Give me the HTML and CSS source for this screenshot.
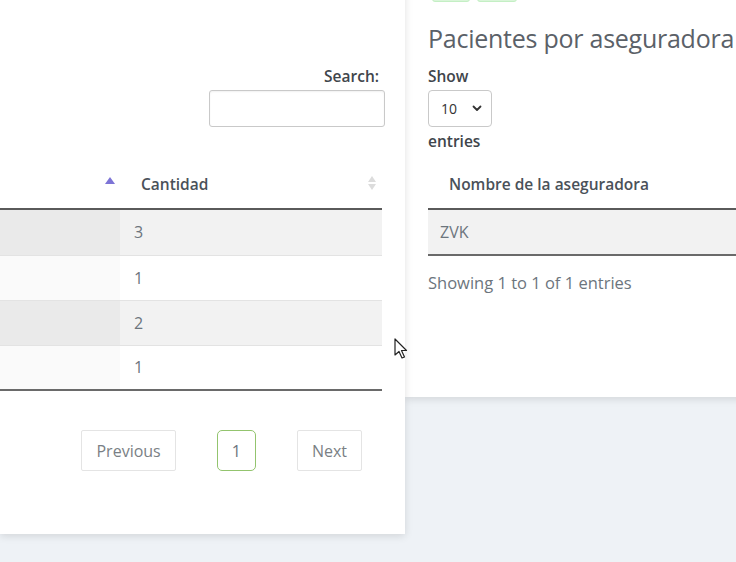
FILE: index.html
```
<!DOCTYPE html>
<html lang="es">
<head>
<meta charset="utf-8">
<title>Pacientes por aseguradora</title>
<link rel="stylesheet" href="styles.css">
</head>
<body>
<div class="layout">
  <section class="card card-left">
    <div class="dt-top">
      <label class="search">Search:</label>
      <input class="search-input" type="text" aria-label="Search">
    </div>
    <table class="dt dt-left">
      <thead>
        <tr>
          <th class="col-a"><span class="sort-asc"></span></th>
          <th class="col-b">Cantidad<span class="sort-both"><i class="up"></i><i class="down"></i></span></th>
        </tr>
      </thead>
      <tbody>
        <tr class="odd"><td class="col-a"></td><td>3</td></tr>
        <tr class="even"><td class="col-a"></td><td>1</td></tr>
        <tr class="odd"><td class="col-a"></td><td>2</td></tr>
        <tr class="even"><td class="col-a"></td><td>1</td></tr>
      </tbody>
    </table>
    <div class="pager">
      <a class="pg">Previous</a>
      <a class="pg active">1</a>
      <a class="pg">Next</a>
    </div>
  </section>

  <section class="card card-right">
    <div class="btns"><span class="gbtn"></span><span class="gbtn w2"></span></div>
    <h2 class="title">Pacientes por aseguradora</h2>
    <div class="label">Show</div>
    <div class="select"><span>10</span><svg width="10" height="7" viewBox="0 0 10 7"><path d="M1.5 1.5 L5 5 L8.5 1.5" fill="none" stroke="#333" stroke-width="1.8" stroke-linecap="round" stroke-linejoin="round"/></svg></div>
    <div class="label">entries</div>
    <table class="dt dt-right">
      <thead>
        <tr><th>Nombre de la aseguradora</th></tr>
      </thead>
      <tbody>
        <tr class="odd"><td>ZVK</td></tr>
      </tbody>
    </table>
    <div class="info">Showing 1 to 1 of 1 entries</div>
  </section>
</div>
<svg class="cursor" width="14" height="22" viewBox="0 0 14 22"><path d="M1 1 L1 17 L5 13.5 L8 20 L10.5 19 L7.5 12.5 L12.5 12.5 Z" fill="#fff" stroke="#222" stroke-width="1.2" stroke-linejoin="round"/></svg>
</body>
</html>
```

FILE: styles.css
```
* { box-sizing: border-box; }
html, body { margin: 0; padding: 0; }
body {
  background: #eef2f6;
  font-family: "Open Sans", "Noto Sans", sans-serif;
  font-size: 15px;
  color: #6c757d;
  width: 736px;
  height: 562px;
  overflow: hidden;
  position: relative;
}
.layout {
  display: flex;
  align-items: flex-start;
  margin-top: -30px;
}
.card {
  background: #fff;
  box-shadow: 0 2px 8px rgba(0,0,0,0.12);
}
.card-left {
  width: 405px;
  flex: none;
  padding: 95px 23px 63px 0;
  position: relative;
  z-index: 2;
}
.dt-top {
  display: flex;
  flex-direction: column;
  align-items: flex-end;
}
.search {
  line-height: 22px;
  font-weight: 600;
  color: #40454b;
  font-size: 15.5px;
  margin-right: 3px;
}
.search-input {
  margin-top: 3px;
  margin-right: -3px;
  width: 176px;
  height: 37px;
  border: 1px solid #c9c9c9;
  border-radius: 3px;
  box-shadow: inset 0 1px 2px rgba(0,0,0,0.06);
}
.dt {
  border-collapse: collapse;
  margin-top: 32px;
}
.dt-left { width: 382px; }
.dt th {
  height: 50px;
  padding: 0 0 0 21px;
  text-align: left;
  font-weight: 600;
  font-size: 15.5px;
  color: #4a5159;
  border-bottom: 2px solid #5a5a5a;
  position: relative;
}
.dt td {
  height: 45px;
  padding: 0 0 0 14px;
  font-size: 16px;
  color: #6c757d;
  border-top: 1px solid #e3e3e3;
}
.dt tbody tr:first-child td { border-top: 0; height: 46px; }
.dt tbody tr:last-child td { border-bottom: 2px solid #6a6a6a; }
.dt .col-a { width: 120px; }
.dt tr.odd td { background: #f2f2f2; }
.dt tr.odd td.col-a { background: #eaeaea; }
.dt tr.even td.col-a { background: #fafafa; }
.sort-asc {
  position: absolute;
  right: 5px;
  top: 18px;
  width: 0; height: 0;
  border-left: 5px solid transparent;
  border-right: 5px solid transparent;
  border-bottom: 7px solid #7d74d6;
}
.sort-both {
  position: absolute;
  right: 6px;
  top: 17px;
  display: flex;
  flex-direction: column;
  gap: 2px;
}
.sort-both i {
  display: block;
  width: 0; height: 0;
  border-left: 4px solid transparent;
  border-right: 4px solid transparent;
}
.sort-both .up { border-bottom: 6px solid #dcdcdc; }
.sort-both .down { border-top: 6px solid #dcdcdc; }
.pager {
  display: flex;
  justify-content: flex-end;
  gap: 41px;
  margin-top: 39px;
  margin-right: 20px;
}
.pg {
  height: 41px;
  padding: 0 14px;
  display: flex;
  align-items: center;
  border: 1px solid #e4e4e4;
  border-radius: 2px;
  color: #7a7f85;
  font-size: 16px;
}
.pg.active {
  padding: 0 14px;
  border-color: #93c46e;
  border-radius: 5px;
  color: #6c757d;
}
.card-right {
  width: 560px;
  flex: none;
  padding: 0 0 103px 23px;
  position: relative;
  z-index: 1;
}
.btns {
  display: flex;
  gap: 7px;
  margin-left: 4px;
}
.gbtn {
  width: 38px;
  height: 32px;
  background: #d9f5d9;
  border: 1px solid #c4efc4;
  border-radius: 3px;
}
.gbtn.w2 { width: 40px; }
.title {
  margin: 19px 0 0;
  font-size: 25px;
  letter-spacing: -0.25px;
  line-height: 34px;
  font-weight: 400;
  color: #5b6168;
}
.label {
  margin-top: 10px;
  line-height: 22px;
  font-weight: 600;
  font-size: 15.5px;
  color: #40454b;
}
.select + .label { margin-top: 3px; }
.select {
  margin-top: 3px;
  width: 64px;
  height: 37px;
  border: 1px solid #c9c9c9;
  border-radius: 4px;
  display: flex;
  align-items: center;
  justify-content: space-between;
  padding: 0 9px 0 12px;
  color: #333;
  font-size: 14px;
}
.dt-right {
  width: 100%;
  margin-top: 7px;
}
.dt-right td { padding-left: 12px; }
.info {
  margin-top: 16px;
  line-height: 22px;
  font-size: 16.5px;
  color: #6c757d;
}
.cursor {
  position: absolute;
  left: 394px;
  top: 338px;
  z-index: 5;
}
```
